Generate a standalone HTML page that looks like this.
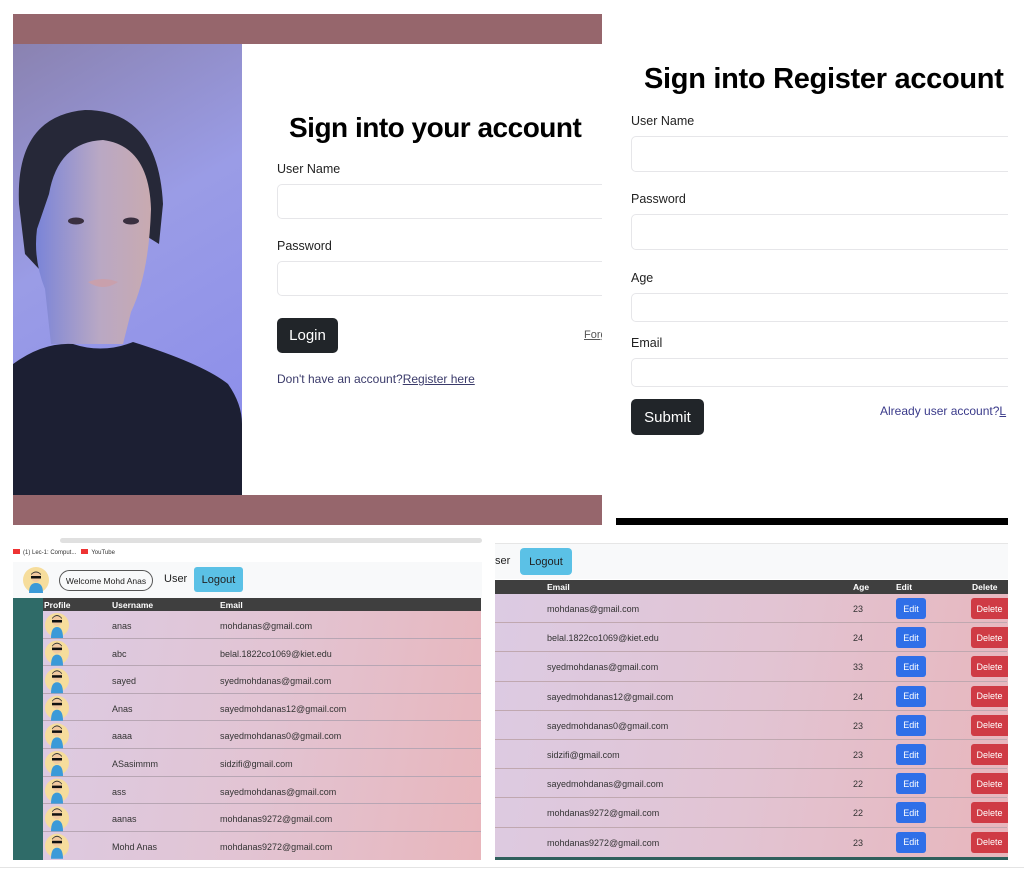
<!DOCTYPE html>
<html><head><meta charset="utf-8"><style>
*{margin:0;padding:0;box-sizing:border-box}
body{width:1024px;height:872px;background:#fff;position:relative;overflow:hidden;font-family:"Liberation Sans",sans-serif;color:#222}
.a{position:absolute}
.inp{position:absolute;background:#fff;border:1px solid #e6e6e9;border-radius:5px}
.lbl{position:absolute;font-size:12.5px;color:#222}
.btn{position:absolute;background:#212529;color:#fff;border-radius:5px;font-size:15px;display:flex;align-items:center;justify-content:center}
.row3{position:absolute;left:43px;width:438px;height:27.6px;border-bottom:1px solid #b8a6b4;font-size:9px;color:#333}
.row3 span{position:absolute;top:10px}
.row4{position:absolute;left:495px;width:512px;height:29.2px;border-bottom:1px solid #c0a8b0;font-size:9px;color:#333}
.row4 span{position:absolute;top:10px}
.e{position:absolute;left:401px;top:4px;width:30px;height:21px;background:#2f6fe8;color:#fff;border-radius:3px;font-size:9px;display:flex;align-items:center;justify-content:center}
.d{position:absolute;left:476px;top:4px;width:37px;height:21px;background:#cf3b45;color:#fff;border-radius:3px 0 0 3px;font-size:9px;display:flex;align-items:center;justify-content:center}
</style></head><body>

<!-- Panel 1 -->
<div class="a" style="left:13px;top:14px;width:589px;height:30px;background:#96666c"></div>
<div class="a" style="left:13px;top:495px;width:589px;height:30px;background:#96666c"></div>
<svg class="a" style="left:13px;top:44px" width="229" height="451" viewBox="0 0 229 451">
<defs>
<linearGradient id="bg" x1="0" y1="0" x2="0.3" y2="1"><stop offset="0" stop-color="#8a82b0"/><stop offset="0.5" stop-color="#9a9ce6"/><stop offset="1" stop-color="#8e90ea"/></linearGradient>
<linearGradient id="sk" x1="0" y1="0" x2="1" y2="0"><stop offset="0" stop-color="#7a84d8"/><stop offset="0.55" stop-color="#b9a8c4"/><stop offset="1" stop-color="#c9aab0"/></linearGradient>
</defs>
<rect width="229" height="451" fill="url(#bg)"/>
<path d="M6 160 Q2 72 72 66 Q145 66 150 160 L146 200 L130 190 L40 240 L12 210 Z" fill="#262838"/>
<path d="M36 150 Q45 98 90 96 Q136 102 138 165 Q136 230 118 268 L110 300 L38 300 L32 245 Q20 215 24 185 Z" fill="url(#sk)"/>
<ellipse cx="63" cy="177" rx="8" ry="3.5" fill="#3a3040"/><ellipse cx="118" cy="177" rx="8" ry="3.5" fill="#3a3040"/>
<path d="M75 238 Q90 232 105 238 Q90 248 75 238Z" fill="#c9a0ac"/>
<path d="M0 320 Q30 298 60 300 Q90 310 120 298 Q190 320 215 340 Q229 360 229 380 L229 451 L0 451 Z" fill="#1c1f33"/>
</svg>
<div class="a" style="left:289px;top:112px;font-size:28px;font-weight:bold;color:#000;letter-spacing:-0.5px;white-space:nowrap">Sign into your account</div>
<div class="lbl" style="left:277px;top:162px">User Name</div>
<div class="inp" style="left:277px;top:184px;width:335px;height:35px"></div>
<div class="lbl" style="left:277px;top:239px">Password</div>
<div class="inp" style="left:277px;top:261px;width:335px;height:35px"></div>
<div class="btn" style="left:277px;top:318px;width:61px;height:35px">Login</div>
<div class="a" style="left:584px;top:329px;font-size:11px;color:#555;text-decoration:underline">Forg</div>
<div class="a" style="left:277px;top:372px;font-size:12px;color:#3a3a6a">Don't have an account?<u>Register here</u></div>
<div class="a" style="left:602px;top:14px;width:14px;height:512px;background:#fff"></div>

<!-- Panel 2 -->
<div class="a" style="left:644px;top:63px;font-size:29px;font-weight:bold;color:#000;white-space:nowrap;letter-spacing:-0.3px;width:364px;overflow:hidden">Sign into Register account</div>
<div class="lbl" style="left:631px;top:114px">User Name</div>
<div class="inp" style="left:631px;top:136px;width:390px;height:36px"></div>
<div class="lbl" style="left:631px;top:192px">Password</div>
<div class="inp" style="left:631px;top:214px;width:390px;height:36px"></div>
<div class="lbl" style="left:631px;top:271px">Age</div>
<div class="inp" style="left:631px;top:293px;width:390px;height:29px"></div>
<div class="lbl" style="left:631px;top:336px">Email</div>
<div class="inp" style="left:631px;top:358px;width:390px;height:29px"></div>
<div class="btn" style="left:631px;top:399px;width:73px;height:36px">Submit</div>
<div class="a" style="left:880px;top:404px;font-size:12px;color:#3a3a8a;white-space:nowrap">Already user account?<u>L</u></div>
<div class="a" style="left:1008px;top:0;width:16px;height:540px;background:#fff"></div>
<div class="a" style="left:616px;top:518px;width:392px;height:7px;background:#000"></div>

<!-- Panel 3 -->
<div class="a" style="left:60px;top:538px;width:422px;height:5px;background:#e0e0e0;border-radius:3px"></div>
<div class="a" style="left:13px;top:549px;font-size:6px;color:#333"><span style="display:inline-block;width:7px;height:5px;background:#e33;margin-right:3px"></span>(1) Lec-1: Comput...&nbsp;&nbsp;&nbsp;<span style="display:inline-block;width:7px;height:5px;background:#e33;margin-right:3px"></span>YouTube</div>
<div class="a" style="left:13px;top:562px;width:469px;height:36px;background:#f8f9fa"></div>
<svg class="a" style="left:23px;top:567px" width="26" height="26" viewBox="0 0 26 26"><circle cx="13" cy="13" r="13" fill="#f6dd9c"/><circle cx="13" cy="10" r="5" fill="#f2c9a0"/><path d="M8 8 Q13 3 18 8 L18 7 Q13 2 8 7Z" fill="#333"/><rect x="8" y="9" width="10" height="2.5" fill="#111"/><path d="M6 26 Q6 16 13 16 Q20 16 20 26Z" fill="#3b9ad8"/></svg>
<div class="a" style="left:59px;top:570px;width:94px;height:21px;border:1px solid #555;border-radius:11px;font-size:8.5px;display:flex;align-items:center;justify-content:center;color:#222">Welcome Mohd Anas</div>
<div class="a" style="left:164px;top:573px;font-size:11px">User</div>
<div class="a" style="left:194px;top:567px;width:49px;height:25px;background:#5bc1e6;border-radius:3px;font-size:11px;display:flex;align-items:center;justify-content:center">Logout</div>
<div class="a" style="left:13px;top:598px;width:30px;height:262px;background:#2f6b68"></div>
<div class="a" style="left:43px;top:598px;width:438px;height:13px;background:#3f3f3f;color:#fff;font-size:8.5px;font-weight:bold"><span class="a" style="left:1px;top:2px">Profile</span><span class="a" style="left:69px;top:2px">Username</span><span class="a" style="left:177px;top:2px">Email</span></div>
<div class="a" style="left:43px;top:611px;width:438px;height:249px;background:linear-gradient(100deg,#dccbe3,#e2c4d3 50%,#e8b6bc)"></div>

<!-- Panel 4 -->
<div class="a" style="left:495px;top:543px;width:513px;height:36px;background:#f8f9fa;border-top:1px solid #e6e6e6"></div>
<div class="a" style="left:495px;top:555px;font-size:11px">ser</div>
<div class="a" style="left:520px;top:548px;width:52px;height:27px;background:#5bc1e6;border-radius:4px;font-size:11px;display:flex;align-items:center;justify-content:center">Logout</div>
<div class="a" style="left:495px;top:580px;width:513px;height:14px;background:#3f3f3f;color:#fff;font-size:8.5px;font-weight:bold"><span class="a" style="left:52px;top:2px">Email</span><span class="a" style="left:358px;top:2px">Age</span><span class="a" style="left:401px;top:2px">Edit</span><span class="a" style="left:477px;top:2px">Delete</span></div>
<div class="a" style="left:495px;top:594px;width:513px;height:263px;background:linear-gradient(100deg,#dccbe3,#e2c4d3 50%,#e8b6bc)"></div>
<div class="a" style="left:495px;top:857px;width:513px;height:3px;background:#2f5f5c"></div>

<div class="row3" style="top:611px"><span style="left:69px">anas</span><span style="left:177px">mohdanas@gmail.com</span></div>
<div class="row3" style="top:638.6px"><span style="left:69px">abc</span><span style="left:177px">belal.1822co1069@kiet.edu</span></div>
<div class="row3" style="top:666.2px"><span style="left:69px">sayed</span><span style="left:177px">syedmohdanas@gmail.com</span></div>
<div class="row3" style="top:693.8px"><span style="left:69px">Anas</span><span style="left:177px">sayedmohdanas12@gmail.com</span></div>
<div class="row3" style="top:721.4px"><span style="left:69px">aaaa</span><span style="left:177px">sayedmohdanas0@gmail.com</span></div>
<div class="row3" style="top:749px"><span style="left:69px">ASasimmm</span><span style="left:177px">sidzifi@gmail.com</span></div>
<div class="row3" style="top:776.6px"><span style="left:69px">ass</span><span style="left:177px">sayedmohdanas@gmail.com</span></div>
<div class="row3" style="top:804.2px"><span style="left:69px">aanas</span><span style="left:177px">mohdanas9272@gmail.com</span></div>
<div class="row3" style="top:831.8px;border:none;height:28px"><span style="left:69px">Mohd Anas</span><span style="left:177px">mohdanas9272@gmail.com</span></div>

<svg class="a" style="left:45px;top:612px" width="26" height="248" viewBox="0 0 26 248">
<defs><g id="av"><circle cx="12" cy="13" r="12" fill="#f6dd9c"/><circle cx="12" cy="9" r="5" fill="#f2c9a0"/><path d="M7 7 Q12 1 17 7 L17 6 Q12 0 7 6Z" fill="#333"/><rect x="7" y="8" width="10" height="2.5" fill="#111"/><path d="M6 26 Q6 15 12 15 Q18 15 18 26Z" fill="#3b9ad8"/></g></defs>
<use href="#av" y="0"/><use href="#av" y="27.6"/><use href="#av" y="55.2"/><use href="#av" y="82.8"/><use href="#av" y="110.4"/><use href="#av" y="138"/><use href="#av" y="165.6"/><use href="#av" y="193.2"/><use href="#av" y="220.8"/>
</svg>

<div class="row4" style="top:594px"><span style="left:52px">mohdanas@gmail.com</span><span style="left:358px">23</span><div class="e">Edit</div><div class="d">Delete</div></div>
<div class="row4" style="top:623.2px"><span style="left:52px">belal.1822co1069@kiet.edu</span><span style="left:358px">24</span><div class="e">Edit</div><div class="d">Delete</div></div>
<div class="row4" style="top:652.4px"><span style="left:52px">syedmohdanas@gmail.com</span><span style="left:358px">33</span><div class="e">Edit</div><div class="d">Delete</div></div>
<div class="row4" style="top:681.6px"><span style="left:52px">sayedmohdanas12@gmail.com</span><span style="left:358px">24</span><div class="e">Edit</div><div class="d">Delete</div></div>
<div class="row4" style="top:710.8px"><span style="left:52px">sayedmohdanas0@gmail.com</span><span style="left:358px">23</span><div class="e">Edit</div><div class="d">Delete</div></div>
<div class="row4" style="top:740px"><span style="left:52px">sidzifi@gmail.com</span><span style="left:358px">23</span><div class="e">Edit</div><div class="d">Delete</div></div>
<div class="row4" style="top:769.2px"><span style="left:52px">sayedmohdanas@gmail.com</span><span style="left:358px">22</span><div class="e">Edit</div><div class="d">Delete</div></div>
<div class="row4" style="top:798.4px"><span style="left:52px">mohdanas9272@gmail.com</span><span style="left:358px">22</span><div class="e">Edit</div><div class="d">Delete</div></div>
<div class="row4" style="top:827.6px;border:none"><span style="left:52px">mohdanas9272@gmail.com</span><span style="left:358px">23</span><div class="e">Edit</div><div class="d">Delete</div></div>

<div class="a" style="left:0;top:867px;width:1024px;height:1px;background:#e4e4e4"></div>
</body></html>
